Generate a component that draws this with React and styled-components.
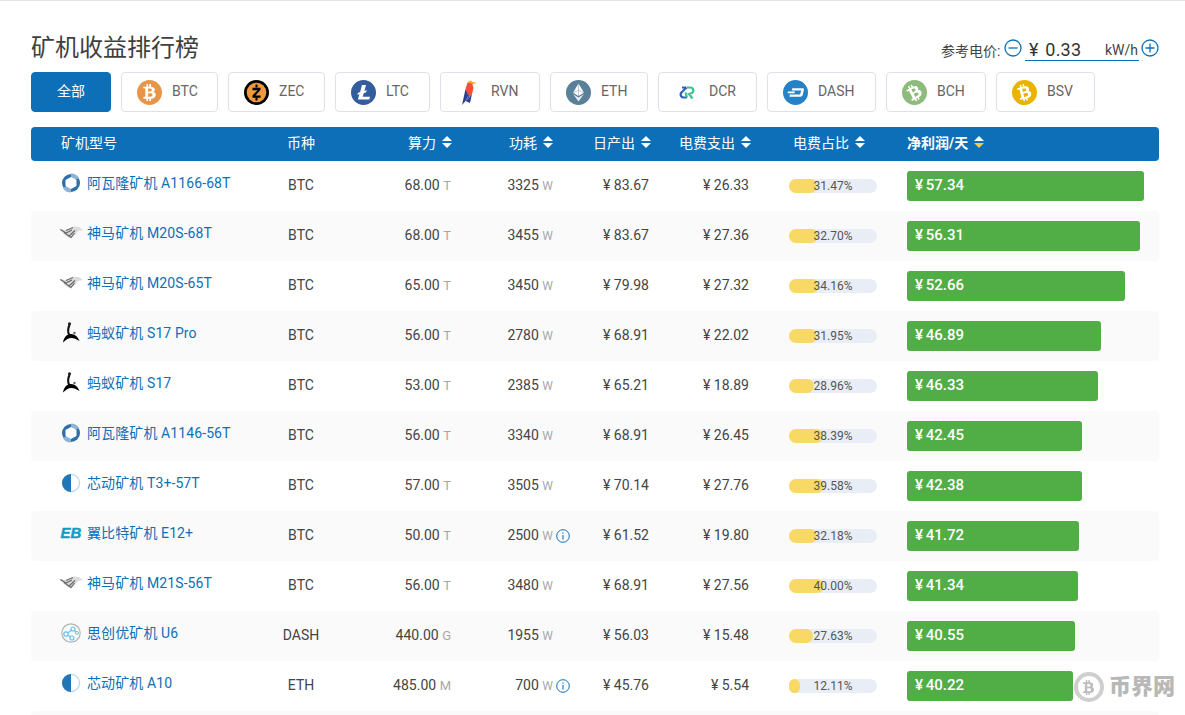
import React from "react";
import styled, { createGlobalStyle } from "styled-components";
import { FaBtc } from "react-icons/fa";

const Global = createGlobalStyle`
  html, body { margin: 0; padding: 0; height: 715px; overflow: hidden; background: #fff; }
  body { font-family: Roboto, "Noto Sans CJK SC", sans-serif; font-size: 14px; color: #444; }
  * { box-sizing: border-box; }
`;

const Page = styled.div`
  position: relative;
  height: 715px;
  overflow: hidden;
  border-top: 1px solid #e4e4e4;
  padding: 30px 26px 0 31px;
`;
const TopRow = styled.div`
  display: flex;
  justify-content: space-between;
  align-items: flex-start;
  height: 41px;
`;
const Title = styled.h1`
  margin: 0;
  font-size: 24px;
  line-height: 34px;
  font-weight: 400;
  color: #3f3f3f;
`;
const Price = styled.div`
  display: flex;
  align-items: center;
  height: 30px;
  margin-top: 2px;
`;
const PriceLabel = styled.span`
  font-size: 14px;
  color: #444;
  margin-top: 4px;
  width: 63px;
  white-space: nowrap;
`;
const RoundBtn = styled.svg`
  width: 18px;
  height: 18px;
  flex: none;
  display: block;
`;
const PriceInput = styled.div`
  width: 114px;
  height: 28px;
  align-self: flex-start;
  margin: 0 2px 0 3px;
  border-bottom: 1px solid #0d6fb8;
  display: flex;
  align-items: center;
  padding: 5px 1px 0 4px;
`;
const PriceValue = styled.span`
  font-size: 18px;
  color: #333;
  flex: 1;
  word-spacing: 2px;
  letter-spacing: 0.2px;
  white-space: pre;
`;
const PriceUnit = styled.span`
  font-size: 14px;
  color: #444;
  margin-top: 2px;
`;
const Tabs = styled.div`
  display: flex;
  gap: 10px;
  height: 40px;
`;
const Tab = styled.div`
  display: flex;
  align-items: center;
  justify-content: ${(p) => (p.$active ? "center" : "flex-start")};
  gap: 10px;
  width: ${(p) => p.$w}px;
  height: 40px;
  border: 1px solid ${(p) => (p.$active ? "#0d6fb8" : "#dfe1ea")};
  border-radius: 4px;
  background: ${(p) => (p.$active ? "#0d6fb8" : "#fff")};
  color: ${(p) => (p.$active ? "#fff" : "#666")};
  padding-left: ${(p) => (p.$active ? 0 : 15)}px;
  font-size: 14px;
  line-height: 1;
  white-space: nowrap;
`;
const TabLabel = styled.span`
  margin-bottom: 2px;
`;
const CoinDisc = styled.span`
  width: 25px;
  height: 25px;
  flex: none;
  border-radius: 50%;
  background: ${(p) => p.$bg};
  color: #fff;
  display: flex;
  align-items: center;
  justify-content: center;
  font-size: 17px;
  svg { transform: rotate(${(p) => p.$turn || 0}deg); }
`;
const CoinSvg = styled.svg`
  width: 25px;
  height: 25px;
  flex: none;
  display: block;
`;
const HeadRow = styled.div`
  display: grid;
  grid-template-columns: 256px 121px 101px 84px 86px 114px 114px 1fr;
  align-items: center;
  height: 34px;
  margin-top: 15px;
  padding-bottom: 5px;
  background: #0d6fb8;
  border-radius: 4px;
  color: #fff;
  font-size: 14px;
`;
const HeadCell = styled.div`
  display: flex;
  align-items: center;
  gap: 6px;
  white-space: nowrap;
  padding-left: ${(p) => p.$pad || 0}px;
  font-weight: ${(p) => (p.$bold ? 700 : 400)};
`;
const SortSvg = styled.svg`
  width: 10px;
  height: 12px;
  display: block;
  flex: none;
`;
const Row = styled.div`
  display: grid;
  grid-template-columns: 229px 82px 109px 101px 97px 100px 158px 1fr;
  align-items: center;
  height: 50px;
  border-radius: 4px;
  background: ${(p) => (p.$striped ? "#fafafa" : "#fff")};
  font-size: 14px;
  color: #444;
`;
const NameCell = styled.div`
  display: flex;
  align-items: center;
  padding: 0 0 6px 28px;
  color: #0d6fb8;
  letter-spacing: 0.1px;
  white-space: nowrap;
`;
const NameText = styled.span`
  margin-top: -3px;
`;
const MinerSvg = styled.svg`
  width: 24px;
  height: 22px;
  margin-right: 4px;
  flex: none;
  display: block;
`;
const CoinCell = styled.div`
  text-align: center;
  padding-bottom: 2px;
`;
const NumCell = styled.div`
  position: relative;
  text-align: right;
  white-space: pre;
  padding-bottom: 2px;
`;
const Unit = styled.span`
  color: #a8a8a8;
  font-size: ${(p) => (p.$tight ? 12 : 13)}px;
  letter-spacing: ${(p) => (p.$tight ? -1 : 0)}px;
`;
const InfoIcon = styled.svg`
  position: absolute;
  left: calc(100% + 4px);
  top: 50%;
  transform: translateY(-50%);
  width: 14px;
  height: 14px;
`;
const RatioCell = styled.div`
  padding-left: 40px;
`;
const RatioTrack = styled.div`
  position: relative;
  width: 88px;
  height: 14px;
  border-radius: 7px;
  background: #e9edf5;
`;
const RatioFill = styled.div`
  height: 14px;
  border-radius: 7px;
  background: #f9d965;
`;
const RatioText = styled.span`
  position: absolute;
  inset: 0;
  text-align: center;
  font-size: 12px;
  line-height: 15px;
  color: #555;
`;
const ProfitBar = styled.div`
  height: 30px;
  border-radius: 3px;
  background: #51ad46;
  color: #fff;
  font-size: 15px;
  font-weight: 500;
  line-height: 28px;
  padding-left: 8px;
  word-spacing: -1px;
  white-space: pre;
`;
const Mark = styled.div`
  position: absolute;
  right: 10px;
  bottom: 13px;
  display: flex;
  align-items: center;
  gap: 5px;
  color: #b8b8b8;
  font-size: 22px;
  font-weight: 900;
  line-height: 1;
`;
const MarkDisc = styled.span`
  width: 30px;
  height: 30px;
  border-radius: 50%;
  border: 4px solid #cfcfcf;
  display: flex;
  align-items: center;
  justify-content: center;
  color: #bdbdbd;
  font-size: 15px;
  background: #fff;
`;

const Zec = () => (
  <CoinSvg viewBox="0 0 25 25">
    <circle cx="12.5" cy="12.5" r="12.5" fill="#000" />
    <circle cx="12.5" cy="12.5" r="9.8" fill="#ee9a3c" />
    <path d="M12.5 4.5v3M12.5 17.5v3" stroke="#000" strokeWidth="2" />
    <path d="M8.5 7.8h8v2l-5 5.6h5v2.4h-8v-2.2l5-5.4h-5z" fill="#000" />
  </CoinSvg>
);
const Ltc = () => (
  <CoinSvg viewBox="0 0 25 25">
    <circle cx="12.5" cy="12.5" r="12.5" fill="#345d9d" />
    <path d="M11 5h4l-1.6 6 2.4-.9-.6 2.2-2.5.9-1 3.6h7.3l-.7 2.7H6.9l1.5-5.4-2 .8.5-2 2.2-.9z" fill="#fff" />
  </CoinSvg>
);
const Rvn = () => (
  <CoinSvg viewBox="0 0 25 25">
    <path d="M6 25 L9.500 9 L13 14 L9.500 21z" fill="#2b3f8c" />
    <path d="M9.500 9 L11.500 2.500 L16 2.500 L17.500 8 L16 14 L13 18z" fill="#f0513a" />
    <path d="M13 18 L16 14 L14 23 L9.500 21z" fill="#2b3f8c" />
    <path d="M11.500 2.500 L14 .5 L17 2 L21 3 L17 4z" fill="#f6a623" />
    <path d="M9.500 21 L13 14 L13 18z" fill="#3a57b8" />
  </CoinSvg>
);
const Eth = () => (
  <CoinSvg viewBox="0 0 25 25">
    <circle cx="12.5" cy="12.5" r="12.5" fill="#5a7f99" />
    <path d="M12.5 3.5 L18 12.8 L12.5 16 L7 12.8z" fill="#fff" />
    <path d="M7.2 14.2 L12.5 17.4 L17.8 14.2 L12.5 21.5z" fill="#fff" opacity=".85" />
    <path d="M12.5 3.5V16M7 12.8l5.5-2.4 5.5 2.4" stroke="#5a7f99" strokeWidth=".4" fill="none" />
  </CoinSvg>
);
const Dcr = () => (
  <CoinSvg viewBox="0 0 25 25">
    <circle cx="12.5" cy="12.5" r="12.2" fill="#fff" stroke="#f0f1f5" strokeWidth=".6" />
    <path d="M8 7.500h4.500M12.500 7.500l-4.500 4.500a3 3 0 0 0 1.500 5.500H13" stroke="#2f62b5" strokeWidth="2.200" fill="none" />
    <path d="M13 7.500h3.500a3 3 0 0 1 1.500 5.500L15 14l3.500 4.500M11.500 12.500l1.500 5" stroke="#3fbf93" strokeWidth="2.200" fill="none" />
  </CoinSvg>
);
const Dash = () => (
  <CoinSvg viewBox="0 0 25 25">
    <circle cx="12.5" cy="12.5" r="12.5" fill="#2582c6" />
    <path d="M9.3 8.2h10.4c1 0 1.4.6 1.2 1.500l-1.100 5c-.3 1.300-1.200 2-2.500 2H6.400l.5-2.200h10.200l1.100-4.100H8.800z" fill="#fff" />
    <path d="M5 11.400h7l-.5 1.900h-7z" fill="#fff" />
  </CoinSvg>
);

const miners = {
  canaan: (
    <MinerSvg viewBox="0 0 24 22">
      <circle cx="12" cy="11" r="9" fill="#2f6fa8" />
      <path d="M12 1.500 A9.500 9.500 0 0 1 20.200 6 L16 8 L12 5.500z M3.800 16 L8 14 L12 16.500 L12 20.500 A9.500 9.500 0 0 1 3.800 16z" fill="#8fb4d3" />
      <path d="M12 5 L17.500 8 L17.500 14 L12 17 L6.500 14 L6.500 8z" fill="#fff" />
    </MinerSvg>
  ),
  whats: (
    <MinerSvg viewBox="0 0 24 22">
      <path d="M0 7 L7 8 L15 4.500 L20 5 L24 8 L19 9 L16 13 L12 16.500 L8 15 L4 11z" fill="#dcdcdc" />
      <path d="M1.500 7.500 L7 11 L13 8 M5 10.500 L10 14 L16 8.500 M8.500 13 L12 15.500 L15.500 11 M7 8.500 L14 5.500" stroke="#6a6a6a" strokeWidth="1.200" fill="none" />
    </MinerSvg>
  ),
  ant: (
    <MinerSvg viewBox="0 0 24 22">
      <circle cx="10.500" cy="1.800" r="1.600" fill="#222" />
      <path d="M10.500 3 C8.500 7 8.500 10 10.500 14" stroke="#111" strokeWidth="2.200" fill="none" />
      <path d="M4 20.500 C5 14 9 12 12 12 C16 12 19 15 20.500 19 C17 17 15 16 12.500 16 C9 16 7 18 4 20.500z" fill="#000" />
      <circle cx="15.500" cy="11" r="1.200" fill="#666" />
    </MinerSvg>
  ),
  half: (
    <MinerSvg viewBox="0 0 24 22">
      <circle cx="12" cy="11" r="8.600" fill="#fff" stroke="#b6d7ee" strokeWidth="1.200" />
      <path d="M12 2 A9 9 0 0 0 12 20z" fill="#1f76b8" />
    </MinerSvg>
  ),
  eb: (
    <MinerSvg viewBox="0 0 24 22">
      <text x="12" y="16" textAnchor="middle" fontFamily="Liberation Sans" fontSize="15" fontWeight="700" fontStyle="italic" fill="#109cc6" stroke="#109cc6" strokeWidth=".4">EB</text>
    </MinerSvg>
  ),
  strong: (
    <MinerSvg viewBox="0 0 24 22">
      <circle cx="12" cy="11" r="9.200" fill="#f5fafd" stroke="#b4b4b4" strokeWidth="1.200" />
      <circle cx="7" cy="12" r="2.200" fill="none" stroke="#6cc4ee" strokeWidth="1.200" />
      <circle cx="14" cy="7" r="2" fill="none" stroke="#6cc4ee" strokeWidth="1.200" />
      <circle cx="13" cy="16" r="2" fill="none" stroke="#6cc4ee" strokeWidth="1.200" />
      <circle cx="18" cy="11" r="1.500" fill="none" stroke="#9bb" strokeWidth="1" />
      <path d="M9 11 L12.500 8M9 13 L11.500 15M15.500 8.500 L17 10" stroke="#6cc4ee" strokeWidth="1.200" />
    </MinerSvg>
  ),
};

const coins = [
  { name: "BTC", w: 97, icon: <CoinDisc $bg="#e8954a"><FaBtc /></CoinDisc> },
  { name: "ZEC", w: 97, icon: <Zec /> },
  { name: "LTC", w: 95, icon: <Ltc /> },
  { name: "RVN", w: 100, icon: <Rvn /> },
  { name: "ETH", w: 98, icon: <Eth /> },
  { name: "DCR", w: 99, icon: <Dcr /> },
  { name: "DASH", w: 109, icon: <Dash /> },
  { name: "BCH", w: 100, icon: <CoinDisc $bg="#8cbb7c" $turn={-28}><FaBtc /></CoinDisc> },
  { name: "BSV", w: 99, icon: <CoinDisc $bg="#eab300" $turn={-14}><FaBtc /></CoinDisc> },
];

const rows = [
  ["canaan", "阿瓦隆矿机 A1166-68T", "BTC", "68.00", "T", "3325", false, "83.67", "26.33", 31.47, 57.34],
  ["whats", "神马矿机 M20S-68T", "BTC", "68.00", "T", "3455", false, "83.67", "27.36", 32.7, 56.31],
  ["whats", "神马矿机 M20S-65T", "BTC", "65.00", "T", "3450", false, "79.98", "27.32", 34.16, 52.66],
  ["ant", "蚂蚁矿机 S17 Pro", "BTC", "56.00", "T", "2780", false, "68.91", "22.02", 31.95, 46.89],
  ["ant", "蚂蚁矿机 S17", "BTC", "53.00", "T", "2385", false, "65.21", "18.89", 28.96, 46.33],
  ["canaan", "阿瓦隆矿机 A1146-56T", "BTC", "56.00", "T", "3340", false, "68.91", "26.45", 38.39, 42.45],
  ["half", "芯动矿机 T3+-57T", "BTC", "57.00", "T", "3505", false, "70.14", "27.76", 39.58, 42.38],
  ["eb", "翼比特矿机 E12+", "BTC", "50.00", "T", "2500", true, "61.52", "19.80", 32.18, 41.72],
  ["whats", "神马矿机 M21S-56T", "BTC", "56.00", "T", "3480", false, "68.91", "27.56", 40.0, 41.34],
  ["strong", "思创优矿机 U6", "DASH", "440.00", "G", "1955", false, "56.03", "15.48", 27.63, 40.55],
  ["half", "芯动矿机 A10", "ETH", "485.00", "M", "700", true, "45.76", "5.54", 12.11, 40.22],
];

const Sort = ({ active }) => (
  <SortSvg viewBox="0 0 10 12">
    <path d="M5 0 L10 5 H0z" fill="#fff" />
    <path d="M0 7 H10 L5 12z" fill={active ? "#f6c94a" : "#fff"} />
  </SortSvg>
);

export default function App() {
  return (
    <Page>
      <Global />
      <TopRow>
        <Title>矿机收益排行榜</Title>
        <Price>
          <PriceLabel>参考电价:</PriceLabel>
          <RoundBtn viewBox="0 0 18 18">
            <circle cx="9" cy="9" r="8" fill="none" stroke="#0d6fb8" strokeWidth="1.300" />
            <path d="M4.500 9h9" stroke="#0d6fb8" strokeWidth="1.300" />
          </RoundBtn>
          <PriceInput>
            <PriceValue>¥ 0.33</PriceValue>
            <PriceUnit>kW/h</PriceUnit>
          </PriceInput>
          <RoundBtn viewBox="0 0 18 18">
            <circle cx="9" cy="9" r="8" fill="none" stroke="#0d6fb8" strokeWidth="1.300" />
            <path d="M4.500 9h9M9 4.500v9" stroke="#0d6fb8" strokeWidth="1.300" />
          </RoundBtn>
        </Price>
      </TopRow>
      <Tabs>
        <Tab $active $w={80}><TabLabel>全部</TabLabel></Tab>
        {coins.map((c) => (
          <Tab key={c.name} $w={c.w}>
            {c.icon}
            <TabLabel>{c.name}</TabLabel>
          </Tab>
        ))}
      </Tabs>
      <HeadRow>
        <HeadCell $pad={30}>矿机型号</HeadCell>
        <HeadCell>币种</HeadCell>
        <HeadCell>算力<Sort /></HeadCell>
        <HeadCell>功耗<Sort /></HeadCell>
        <HeadCell>日产出<Sort /></HeadCell>
        <HeadCell>电费支出<Sort /></HeadCell>
        <HeadCell>电费占比<Sort /></HeadCell>
        <HeadCell $bold>净利润/天<Sort active /></HeadCell>
      </HeadRow>
      {rows.map((r, i) => (
        <Row key={r[1]} $striped={i % 2 === 1}>
          <NameCell>{miners[r[0]]}<NameText>{r[1]}</NameText></NameCell>
          <CoinCell>{r[2]}</CoinCell>
          <NumCell>{r[3]} <Unit>{r[4]}</Unit></NumCell>
          <NumCell>
            {r[5]} <Unit $tight>W</Unit>
            {r[6] && (
              <InfoIcon viewBox="0 0 14 14">
                <circle cx="7" cy="7" r="6.300" fill="none" stroke="#0d6fb8" strokeWidth="1" />
                <path d="M7 6v4.500M7 3.500v1.300" stroke="#0d6fb8" strokeWidth="1.100" />
              </InfoIcon>
            )}
          </NumCell>
          <NumCell>¥ {r[7]}</NumCell>
          <NumCell>¥ {r[8]}</NumCell>
          <RatioCell>
            <RatioTrack>
              <RatioFill style={{ width: `${r[9]}%` }} />
              <RatioText>{r[9].toFixed(2)}%</RatioText>
            </RatioTrack>
          </RatioCell>
          <ProfitBar style={{ width: `${(r[10] / 57.34) * 237}px` }}>¥ {r[10].toFixed(2)}</ProfitBar>
        </Row>
      ))}
      <Row $striped />
      <Mark>
        <MarkDisc><FaBtc /></MarkDisc>
        币界网
      </Mark>
    </Page>
  );
}
